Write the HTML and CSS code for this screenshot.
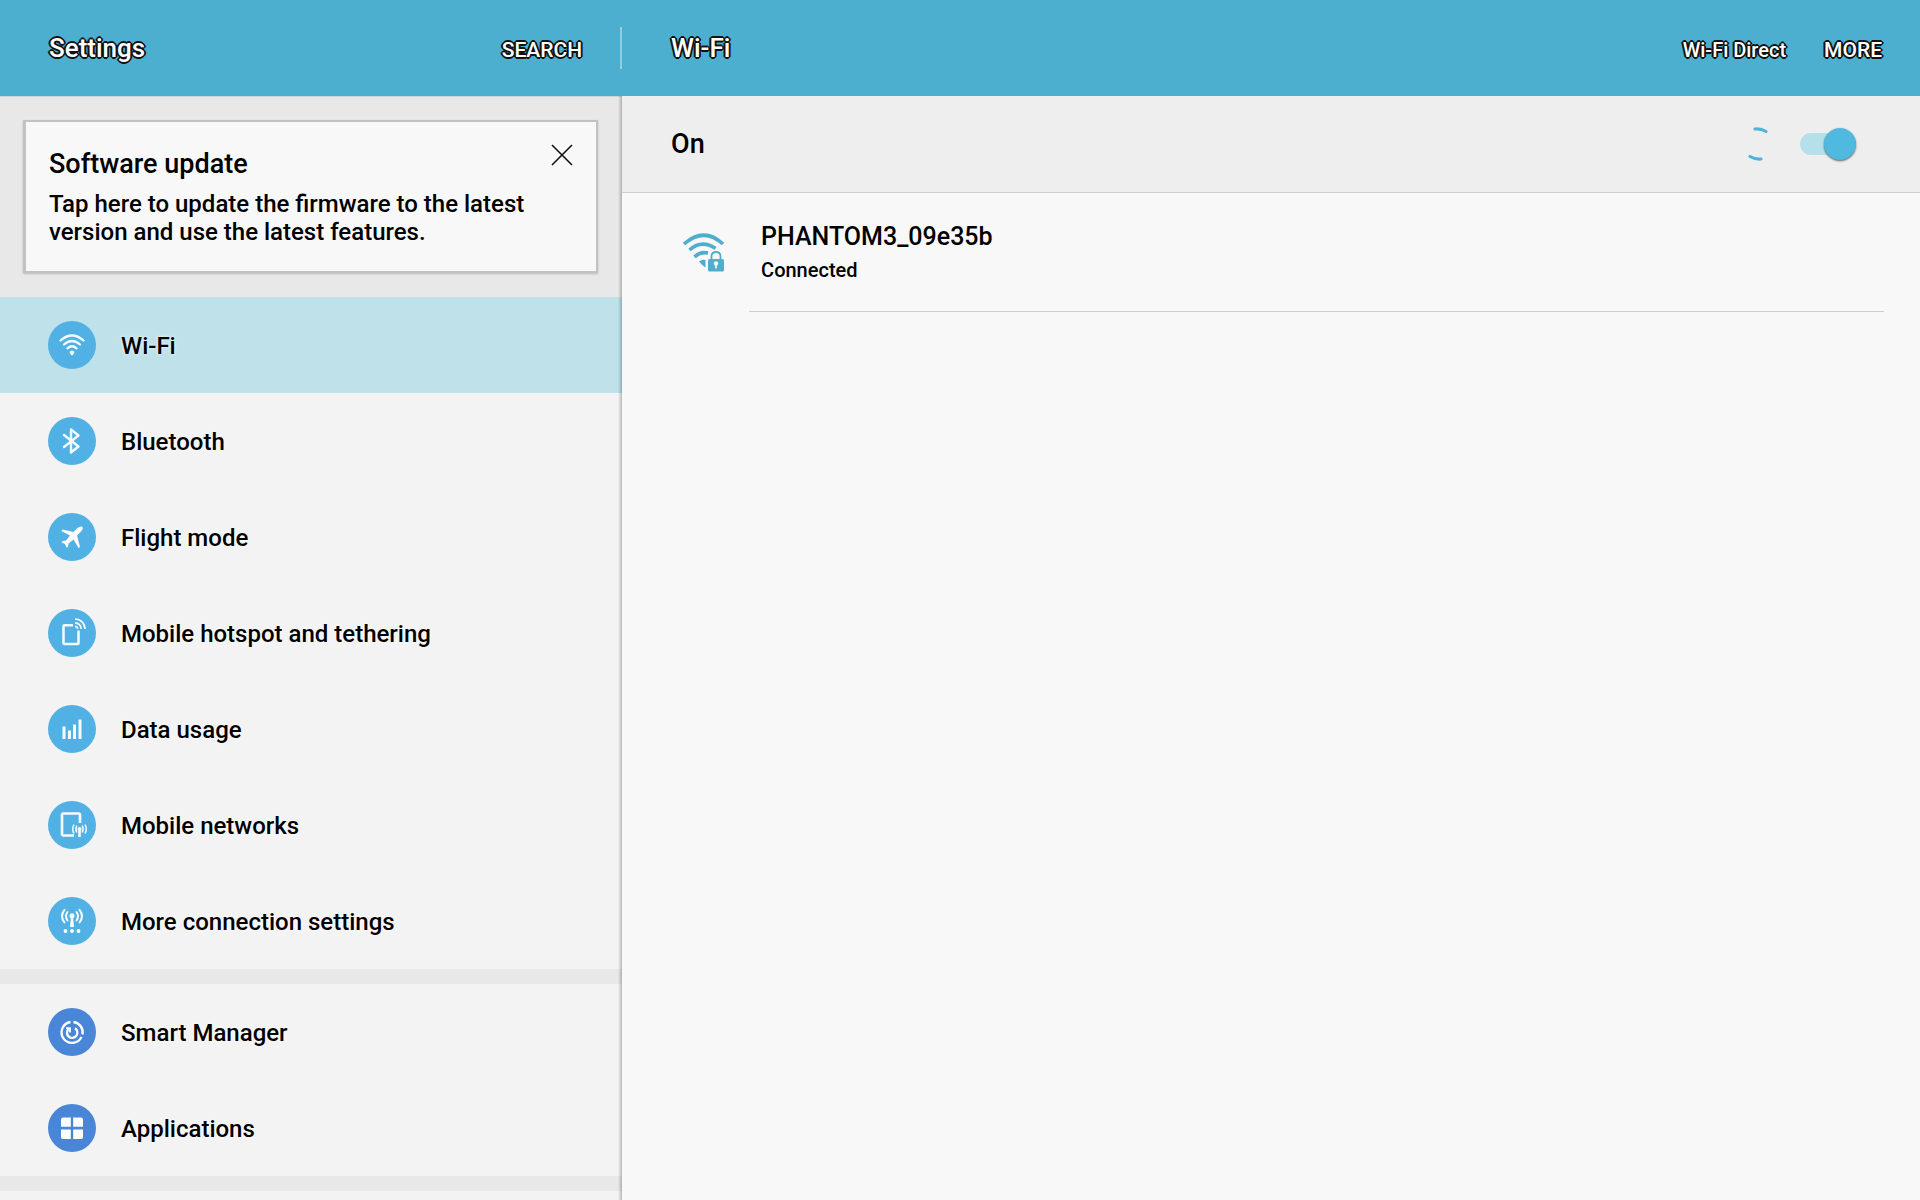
FILE: index.html
```html
<!DOCTYPE html>
<html lang="en">
<head>
    <meta charset="UTF-8" />
    <meta name="viewport" content="width=device-width, initial-scale=1" />
    <title>Settings</title>
    <link rel="stylesheet" href="styles.css">
</head>
<body>
    <div class="page">
        <header class="topbar">
            <div class="topbar-left">
                <h1 class="title">Settings</h1>
                <button class="bar-btn" type="button">SEARCH</button>
            </div>
            <div class="topbar-right">
                <h2 class="title">Wi‑Fi</h2>
                <div class="bar-actions">
                    <button class="bar-btn bar-btn-small" type="button">Wi‑Fi Direct</button>
                    <button class="bar-btn" type="button">MORE</button>
                </div>
            </div>
        </header>

        <div class="content">
            <aside class="sidebar">
                <div class="notice">
                    <div class="card">
                        <div class="card-text">
                            <h3 class="card-title">Software update</h3>
                            <p class="card-body">Tap here to update the firmware to the latest version and use the latest features.</p>
                        </div>
                        <button class="close-btn" type="button" aria-label="Close">
                            <svg width="22" height="22" viewBox="0 0 22 22"><path d="M1 1L21 21M21 1L1 21" stroke="#111" stroke-width="1.6" fill="none"/></svg>
                        </button>
                    </div>
                </div>

                <nav class="menu">
                    <a class="menu-item active" href="#wifi">
                        <svg class="icon" viewBox="0 0 48 48">
                            <circle cx="24" cy="24" r="24" fill="#52b1e4"/>
                            <g fill="none" stroke="#f4fbff" stroke-width="2.3" stroke-linecap="round">
                                <path d="M12.500 19.500Q24 9.500 35.500 19.500"/>
                                <path d="M16 23.500Q24 16.500 32 23.500"/>
                                <path d="M19.500 27.300Q24 23.300 28.500 27.300"/>
                            </g>
                            <path d="M21.500 31Q24 28.500 26.500 31Q26 33 24 34.500Q22 33 21.500 31Z" fill="#fff"/>
                        </svg>
                        <span class="menu-label">Wi‑Fi</span>
                    </a>
                    <a class="menu-item" href="#bluetooth">
                        <svg class="icon" viewBox="0 0 48 48">
                            <circle cx="24" cy="24" r="24" fill="#52b1e4"/>
                            <path d="M16 18L30.500 29.500L23 35.500V12.500L30.500 18.500L16 30" fill="none" stroke="#f4fbff" stroke-width="2.4" stroke-linejoin="round" stroke-linecap="round"/>
                        </svg>
                        <span class="menu-label">Bluetooth</span>
                    </a>
                    <a class="menu-item" href="#flight">
                        <svg class="icon" viewBox="0 0 48 48">
                            <circle cx="24" cy="24" r="24" fill="#52b1e4"/>
                            <path d="M34.500 14Q35.500 15.500 33 18.500L29 22.500L32 34L30.500 35L25.500 26.500L20.500 30.500L20 34L18.500 34.500L17 31L13.500 29.500L14.500 28L18 27.500L22 22.500L13.500 18L14.500 16.500L25.500 19L29.500 15Q33 12.500 34.500 14Z" fill="#fff"/>
                        </svg>
                        <span class="menu-label">Flight mode</span>
                    </a>
                    <a class="menu-item" href="#hotspot">
                        <svg class="icon" viewBox="0 0 48 48">
                            <circle cx="24" cy="24" r="24" fill="#52b1e4"/>
                            <g fill="none" stroke="#f4fbff">
                                <path d="M25 16.200H16.500Q15.500 16.200 15.500 17.200V34Q15.500 35 16.500 35H29.500Q30.500 35 30.500 34V21.500" stroke-width="2.500"/>
                                <path d="M27 10A10 10 0 0 1 37 20M27 13.800A6.200 6.200 0 0 1 33.200 20M27 17.300A2.700 2.700 0 0 1 29.700 20" stroke-width="1.700"/>
                            </g>
                        </svg>
                        <span class="menu-label">Mobile hotspot and tethering</span>
                    </a>
                    <a class="menu-item" href="#data">
                        <svg class="icon" viewBox="0 0 48 48">
                            <circle cx="24" cy="24" r="24" fill="#52b1e4"/>
                            <path d="M14.500 21.500H17.500V34H14.500ZM20 25.500H23V34H20ZM25 19.500H28V34H25ZM30.500 14.500H33.500V34H30.500Z" fill="#f4fbff"/>
                        </svg>
                        <span class="menu-label">Data usage</span>
                    </a>
                    <a class="menu-item" href="#networks">
                        <svg class="icon" viewBox="0 0 48 48">
                            <circle cx="24" cy="24" r="24" fill="#52b1e4"/>
                            <g fill="none" stroke="#f4fbff">
                                <path d="M32 22V14Q32 12.500 30.500 12.500H15.500Q14 12.500 14 14V33Q14 34.500 15.500 34.500H26" stroke-width="2.600"/>
                                <path d="M28.800 24.500Q27 28 28.800 31.500M26 23.500Q23.500 28 26 32.500M34.200 24.500Q36 28 34.200 31.500M37 23.500Q39.500 28 37 32.500" stroke-width="1.500"/>
                                <path d="M31.500 28V36" stroke-width="2.600"/>
                            </g>
                            <circle cx="31.500" cy="28" r="2" fill="#fff"/>
                        </svg>
                        <span class="menu-label">Mobile networks</span>
                    </a>
                    <a class="menu-item" href="#more">
                        <svg class="icon" viewBox="0 0 48 48">
                            <circle cx="24" cy="24" r="24" fill="#52b1e4"/>
                            <g fill="none" stroke="#f4fbff" stroke-width="2" stroke-linecap="round">
                                <path d="M19.500 15Q16.500 19 19.500 23.500M16.500 12.800Q11.500 19 16.500 25.500M28.500 15Q31.500 19 28.500 23.500M31.500 12.800Q36.500 19 31.500 25.500"/>
                            </g>
                            <path d="M23 19H25L26 30H22Z" fill="#fff"/>
                            <circle cx="24" cy="18.800" r="2.500" fill="#fff"/>
                            <g fill="#fff"><circle cx="17.500" cy="34" r="1.900"/><circle cx="24" cy="34" r="1.900"/><circle cx="30.500" cy="34" r="1.900"/></g>
                        </svg>
                        <span class="menu-label">More connection settings</span>
                    </a>
                </nav>

                <nav class="menu">
                    <a class="menu-item" href="#manager">
                        <svg class="icon" viewBox="0 0 48 48">
                            <circle cx="24" cy="24" r="24" fill="#4a86d8"/>
                            <g fill="none" stroke="#fff" stroke-width="2.300">
                                <path d="M22.500 14A10.500 10.500 0 1 0 33.500 29"/>
                                <path d="M25.500 14A10.500 10.500 0 0 1 34.500 26.500"/>
                                <path d="M20.500 21A5.200 5.200 0 1 0 27 20.300"/>
                                <path d="M18 20.200H22V24.500" stroke-width="1.800"/>
                            </g>
                        </svg>
                        <span class="menu-label">Smart Manager</span>
                    </a>
                    <a class="menu-item" href="#apps">
                        <svg class="icon" viewBox="0 0 48 48">
                            <circle cx="24" cy="24" r="24" fill="#4a86d8"/>
                            <g fill="#fff">
                                <path d="M15 13.500H22.800V22.800H13V15.500Q13 13.500 15 13.500Z"/>
                                <path d="M25.200 13.500H33Q35 13.500 35 15.500V22.800H25.200Z"/>
                                <path d="M13 25.500H22.800V35H15Q13 35 13 33Z"/>
                                <path d="M25.200 25.500H35V33Q35 35 33 35H25.200Z"/>
                            </g>
                        </svg>
                        <span class="menu-label">Applications</span>
                    </a>
                </nav>
            </aside>

            <main class="panel">
                <div class="switch-row">
                    <label class="switch-label" for="wifiSwitch">On</label>
                    <div class="switch-controls">
                        <svg class="spinner" viewBox="0 0 36 36">
                            <path d="M17 3Q23 2.500 28 5.500M12 30.500Q17 33.500 23 33" fill="none" stroke="#4fb5d8" stroke-width="3.200" stroke-linecap="round"/>
                        </svg>
                        <input class="switch" type="checkbox" id="wifiSwitch" checked />
                    </div>
                </div>
                <a class="network" href="#network">
                    <svg class="network-icon" viewBox="0 0 44 40">
                        <g fill="none" stroke="#4fadcd" stroke-width="3.600">
                            <path d="M2 11Q22 -6.500 41 11"/>
                            <path d="M7.500 17Q20 6 33.500 15.500"/>
                            <path d="M12.500 24Q18 18.500 26 20"/>
                        </g>
                        <path d="M17 28.500Q20 26 23.500 27V34.500Q20 32.500 17 28.500Z" fill="#4fadcd"/>
                        <path d="M29.500 27V23.500Q29.500 19 34 19Q38.500 19 38.500 23.500V27" fill="none" stroke="#4fadcd" stroke-width="1.800"/>
                        <rect x="26" y="26" width="16" height="12.500" rx="1.500" fill="#4fadcd"/>
                        <circle cx="34" cy="30.500" r="2.200" fill="#f8f8f8"/>
                        <path d="M34 31V35.500" stroke="#f8f8f8" stroke-width="1.600"/>
                    </svg>
                    <div class="network-text">
                        <span class="network-name">PHANTOM3_09e35b</span>
                        <span class="network-state">Connected</span>
                    </div>
                </a>
            </main>
        </div>
    </div>
</body>
</html>
```

FILE: styles.css
```css
* {
    box-sizing: border-box;
}
body {
    margin: 0;
    font-family: Roboto, "Liberation Sans", sans-serif;
    font-weight: 500;
    color: #000;
    background: #f8f8f8;
}
h1, h2, h3, p {
    margin: 0;
    font-weight: 500;
}
a {
    color: inherit;
    text-decoration: none;
}
button {
    padding: 0;
    border: none;
    background: none;
    font: inherit;
    cursor: pointer;
}
svg {
    display: block;
}
.page {
    min-height: 100vh;
    display: flex;
    flex-direction: column;
}

/* top bar */
.topbar {
    display: flex;
    align-items: center;
    height: 96px;
    background: #4cafd0;
    color: #fff;
}
.topbar-left,
.topbar-right {
    display: flex;
    align-items: center;
    justify-content: space-between;
}
.topbar-left {
    flex: 0 0 32.4%;
    height: 42px;
    padding: 0 38px 0 49px;
    border-right: 2px solid #8fcde1;
}
.topbar-right {
    flex: 1;
    padding: 0 38px 0 49px;
}
.title,
.bar-btn {
    color: #fff;
    text-shadow: 1px 1px 0 #111, -1px -1px 0 #111, 1px -1px 0 #111, -1px 1px 0 #111, 2px 0 0 #111, -2px 0 0 #111, 0 2px 0 #111, 0 -2px 0 #111;
}
.title {
    font-size: 26px;
    line-height: 32px;
}
.bar-btn {
    font-size: 21px;
    line-height: 24px;
    padding-top: 4px;
}
.bar-btn-small {
    font-size: 20px;
}
.bar-actions {
    display: flex;
    gap: 38px;
}

.content {
    flex: 1;
    display: flex;
}

/* left column */
.sidebar {
    flex: 0 0 32.4%;
    background: #f3f3f3;
    position: relative;
}
.sidebar::after {
    content: "";
    position: absolute;
    top: 0;
    right: 0;
    bottom: 0;
    width: 4px;
    background: linear-gradient(to right, rgba(0, 0, 0, 0), rgba(0, 0, 0, 0.24));
}
.notice {
    padding: 23px 24px 24px 23px;
    background: #e8e8e8;
    border-top: 1px solid #c9d5d9;
}
.card {
    display: flex;
    justify-content: space-between;
    align-items: flex-start;
    height: 153px;
    padding: 22px 23px 22px 23px;
    background: #f8f8f8;
    border: 2px solid #c2c2c2;
    border-left-width: 3px;
    box-shadow: 0 1px 2px rgba(0, 0, 0, 0.2);
}
.card-text {
    max-width: 490px;
}
.card-title {
    font-size: 27px;
    line-height: 40px;
    padding-bottom: 6px;
}
.card-body {
    font-size: 24px;
    line-height: 28px;
}
.menu {
    border-bottom: 15px solid #e8e8e8;
}
.menu-item {
    display: flex;
    align-items: center;
    gap: 25px;
    height: 96px;
    padding-left: 48px;
    font-size: 24px;
    line-height: 32px;
    text-shadow: 0 0 3px #fff;
}
.menu-item.active {
    background: #bfe2ea;
}
.menu-label {
    padding-top: 2px;
}
.icon {
    width: 48px;
    height: 48px;
}

/* right column */
.panel {
    flex: 1;
}
.switch-row {
    display: flex;
    align-items: center;
    justify-content: space-between;
    height: 97px;
    padding: 0 64px 0 49px;
    background: #eee;
    border-bottom: 1px solid #cfcfcf;
}
.switch-label {
    font-size: 27px;
    line-height: 32px;
}
.switch-controls {
    display: flex;
    align-items: center;
    gap: 26px;
}
.spinner {
    width: 36px;
    height: 36px;
}
.switch {
    appearance: none;
    position: relative;
    width: 56px;
    height: 22px;
    margin: 0;
    border-radius: 11px;
    background: #b5dfe9;
    cursor: pointer;
}
.switch::before {
    content: "";
    position: absolute;
    top: -5px;
    left: 0;
    width: 32px;
    height: 32px;
    border-radius: 50%;
    background: #bbb;
    box-shadow: 0 1px 2px rgba(0, 0, 0, 0.6);
}
.switch:checked::before {
    left: 24px;
    background: #4fb9df;
}
.network {
    display: flex;
    align-items: flex-start;
    padding: 0 36px 0 60px;
}
.network-icon {
    width: 44px;
    height: 40px;
    margin: 40px 23px 0 0;
}
.network-text {
    flex: 1;
    display: flex;
    flex-direction: column;
    height: 119px;
    padding: 28px 0 0 12px;
    border-bottom: 1px solid #cfcfcf;
}
.network-name {
    font-size: 25px;
    line-height: 32px;
}
.network-state {
    font-size: 20px;
    line-height: 34px;
}
```
